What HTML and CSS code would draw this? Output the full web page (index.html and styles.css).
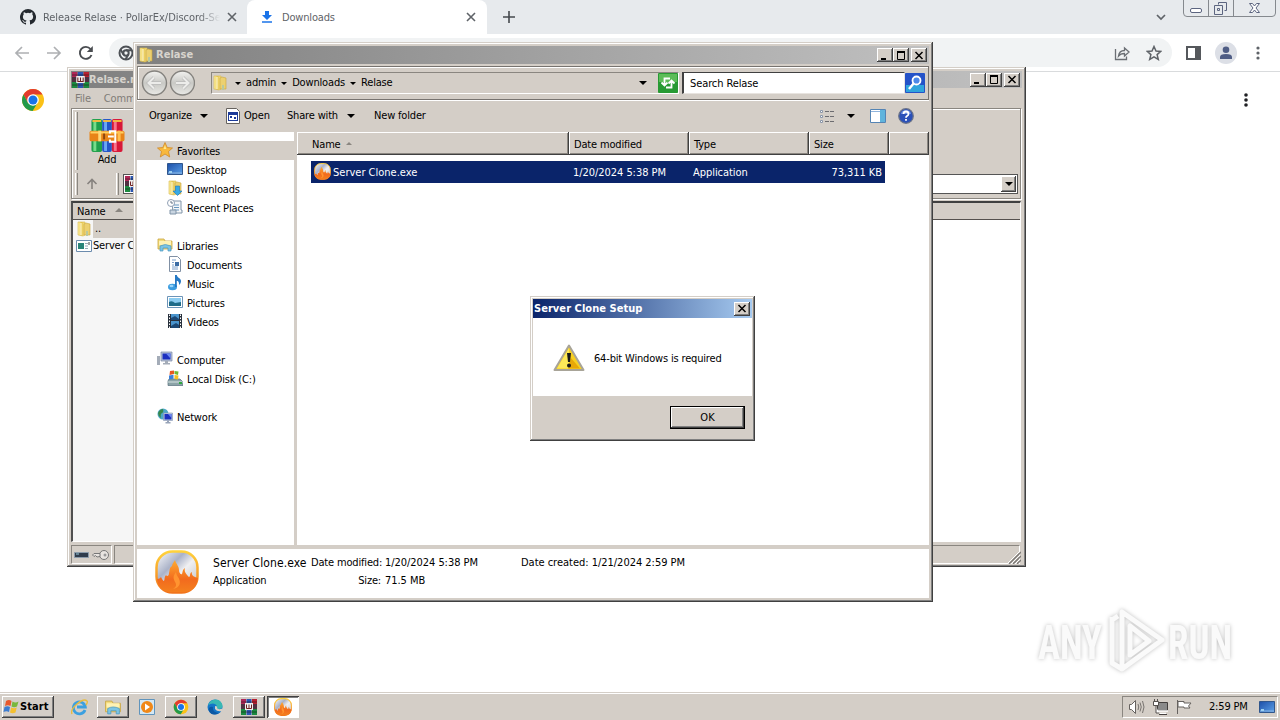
FILE: index.html
```html
<!DOCTYPE html>
<html lang="en">
<head>
    <meta charset="UTF-8">
    <meta name="viewport" content="width=device-width, initial-scale=1.0">
    <title>Downloads</title>
    <link rel="stylesheet" href="styles.css">
</head>
<body>
    <!-- shared icons -->
    <svg class="defs" width="0" height="0">
        <defs>
            <linearGradient id="gFolder" x1="0" x2="1"><stop offset="0" stop-color="#fff3a8"/><stop offset=".5" stop-color="#e8c850"/><stop offset="1" stop-color="#f3df8c"/></linearGradient>
            <linearGradient id="gFire" x1="0" y1="0" x2="0" y2="1"><stop offset="0" stop-color="#ffd23c"/><stop offset="1" stop-color="#f2741a"/></linearGradient>
            <linearGradient id="gFlame" x1="0" y1="0" x2="0" y2="1"><stop offset="0" stop-color="#ffac30"/><stop offset=".6" stop-color="#f26a1e"/><stop offset="1" stop-color="#f4801e"/></linearGradient>
            <linearGradient id="gSilver" x1="0" y1="0" x2="1" y2="1"><stop offset="0" stop-color="#fff"/><stop offset=".35" stop-color="#aab2c8"/><stop offset=".55" stop-color="#f0f0f2"/><stop offset="1" stop-color="#b8b8c0"/></linearGradient>
            <linearGradient id="gScreen" x1="0" y1="0" x2="1" y2="1"><stop offset="0" stop-color="#1c4fa8"/><stop offset="1" stop-color="#5ba0e8"/></linearGradient>
            <linearGradient id="gRound" x1="0" y1="0" x2="0" y2="1"><stop offset="0" stop-color="#f2f2f0"/><stop offset=".5" stop-color="#c9c9c5"/><stop offset="1" stop-color="#e9e9e6"/></linearGradient>
        </defs>
        <symbol id="folder" viewBox="0 0 16 16">
            <path d="M2 1h7v13l-2 1-5-1z" fill="url(#gFolder)" stroke="#d6b84e" stroke-width=".6"/>
            <path d="M8 3l2-1 4 1v11H8z" fill="#ecd070" stroke="#caa63c" stroke-width=".6"/>
            <path d="M5 2v12" stroke="#fffbe0"/><path d="M10 10h2v5h-2z" fill="#b8c8a0"/>
        </symbol>
        <symbol id="chrome" viewBox="0 0 24 24">
            <circle cx="12" cy="12" r="11" fill="#fbc116"/>
            <path d="M2.500 6.500A11 11 0 0 1 21.500 6.500H12l-5 8.400z" fill="#e33b2e"/>
            <path d="M2.500 6.500A11 11 0 0 0 11.600 23l5-8.200-4.600 2.600-5-2.500z" fill="#229a4a"/>
            <circle cx="12" cy="12" r="5.800" fill="#fff"/><circle cx="12" cy="12" r="4.500" fill="#1a73e8"/>
        </symbol>
        <symbol id="rar" viewBox="0 0 16 16">
            <path d="M0 0h5v16H0z" fill="#b02858"/><path d="M5.500 0h5v16h-5z" fill="#2c56b0"/><path d="M11 0h5v16h-5z" fill="#b82030"/>
            <path d="M0 10h5v6H0zM11 10h5v6h-5z" fill="#1c8a40"/>
            <path d="M0 5h16v5H0z" fill="#503040"/><path d="M4 4h8v7H4z" fill="#eee"/>
            <path d="M5.500 5.500v4h5v-4M8 5.500v4" fill="none" stroke="#702020"/><path d="M0 3h16M0 13h16" stroke="#111" opacity=".5"/>
        </symbol>
        <symbol id="rarbig" viewBox="0 0 36 36">
            <rect x="2" y="1" width="11" height="34" rx="2" fill="#21a04c"/><rect x="4" y="2" width="3" height="32" fill="#78dc8a"/>
            <rect x="13" y="1" width="10" height="34" rx="2" fill="#2456c8"/><rect x="15" y="2" width="3" height="32" fill="#6aa8f4"/>
            <rect x="23" y="1" width="11" height="34" rx="2" fill="#d81838"/><rect x="25" y="2" width="3" height="32" fill="#f8748c"/>
            <path d="M3 3h9M14 3h8M24 3h9" stroke="#f2b840" stroke-width="2"/>
            <rect x="0" y="13" width="36" height="11" rx="2" fill="#e88418"/><path d="M1 15h34" stroke="#ffd060" stroke-width="2"/>
            <rect x="9" y="13" width="3" height="11" fill="#ffd878"/><rect x="29" y="13" width="3" height="11" fill="#ffc050"/>
            <path d="M21 16v-2.500h5.500v11H21V22M19 19h6" fill="none" stroke="#fff" stroke-width="2"/><path d="M15 16v6" stroke="#8c4610" stroke-width="2"/>
        </symbol>
        <symbol id="fire" viewBox="0 0 44 44">
            <rect x="1.500" y="1.500" width="41" height="41" rx="16" fill="url(#gSilver)" stroke="url(#gFire)" stroke-width="2.500"/>
            <path d="M2 29c2 0 3-1 4-2 1 2 2 4 3 4 1-2 0-4 2-6 1 2 3 1 3-2 1-3 0-5 3-7 0-2 2-4 3-6 1 4 4 6 4 10 0 3 2 5 3 4 1-2 0-4 3-6-1 4 1 5 2 7 1 1 2 3 3 1 0-2 0-3 2-4-1 4 3 5 6 6-1 9-6 14-15 14H17C8 42 3 38 2 29z" fill="url(#gFlame)"/>
            <path d="M21 22c-3 4-3 6-1 10 2 3 1 5-2 7 8-1 8-8 5-12-1-2-2-3-2-5z" fill="#ff9430"/>
        </symbol>
        <symbol id="library" viewBox="0 0 16 16">
            <path d="M1 2h6l1 2h7v8H1z" fill="#f4dc7c" stroke="#c9a540" stroke-width=".8"/>
            <path d="M2 4h12v4H2z" fill="#fff2b4"/><path d="M3 14V9q5-3 11 0v5h-3v-3H6v3z" fill="#7cc4e4" stroke="#4a98be" stroke-width=".7"/>
        </symbol>
        <symbol id="screen" viewBox="0 0 16 16">
            <path d="M.5 2.500h15v11H.5z" fill="url(#gScreen)" stroke="#30568c"/><path d="M1 12h14" stroke="#8cb4e0"/><path d="M2 10h3v2H2z" fill="#9cd0f0"/>
        </symbol>
        <symbol id="monitor" viewBox="0 0 16 16">
            <path d="M4 1h11v9H4z" fill="#b8c4d8" stroke="#7888a8" stroke-width=".7"/><path d="M5.500 2.500h8v6h-8z" fill="#1c30c0"/><path d="M9 2.500h4.500v5z" fill="#6c88f0"/>
            <path d="M8 10h3v2h2v1.500H6V12h2zM0 5h3v9H0z" fill="#a4acb8"/>
        </symbol>
    </svg>

    <div class="desktop">
        <div class="browser">
            <div class="tabstrip">
                <div class="tab">
                    <svg class="tab-icon" width="16" height="16" viewBox="0 0 16 16"><path fill="#24292f" d="M8 0a8 8 0 0 0-2.530 15.590c.4.070.55-.17.55-.38v-1.490c-2.230.48-2.700-.95-2.700-.95-.36-.92-.89-1.170-.89-1.170-.73-.5.050-.49.050-.49.81.060 1.230.83 1.230.83.72 1.230 1.880.88 2.340.67.070-.52.280-.88.510-1.080-1.780-.2-3.650-.89-3.650-3.950 0-.87.310-1.590.82-2.150-.08-.2-.36-1.020.080-2.120 0 0 .67-.21 2.200.82a7.600 7.600 0 0 1 4 0c1.530-1.040 2.200-.82 2.200-.82.44 1.100.16 1.920.080 2.120.51.560.82 1.270.82 2.150 0 3.070-1.870 3.750-3.650 3.950.29.250.54.730.54 1.480v2.200c0 .21.150.46.550.38A8 8 0 0 0 8 0z"/></svg>
                    <span class="tab-title fade">Release Relase · PollarEx/Discord-Se</span>
                    <svg width="10" height="10" viewBox="0 0 10 10"><path d="M1 1l8 8M9 1L1 9" stroke="#5f6368" stroke-width="1.600"/></svg>
                </div>
                <div class="tab active">
                    <svg class="tab-icon" width="16" height="16" viewBox="0 0 16 16"><path d="M6 2h4v4h3L8 11 3 6h3z" fill="#1a73e8"/><path d="M3 13h10" stroke="#1a73e8" stroke-width="1.500"/></svg>
                    <span class="tab-title">Downloads</span>
                    <svg width="10" height="10" viewBox="0 0 10 10"><path d="M1 1l8 8M9 1L1 9" stroke="#5f6368" stroke-width="1.600"/></svg>
                </div>
                <svg class="newtab" width="12" height="12" viewBox="0 0 12 12"><path d="M6 0v12M0 6h12" stroke="#45494d" stroke-width="1.600"/></svg>
                <svg class="tabsearch" width="10" height="7" viewBox="0 0 10 7"><path d="M1 1l4 4 4-4" fill="none" stroke="#5f6368" stroke-width="1.700"/></svg>
                <svg class="winbtns" width="94" height="17" viewBox="0 0 94 17" fill="none">
                    <path d="M.5-1v14q0 3.500 3.500 3.500h85q3.500 0 3.500-3.500V-1M25.500 0v16M50.500 0v16" stroke="#85898e"/>
                    <rect x="7.500" y="8.500" width="11" height="4" rx="1.500" stroke="#5c6580" fill="#fff"/>
                    <path d="M35.500 4.500v-2h8v8h-2M31.500 5.500h8v9h-8zM34.500 8.500h2v2h-2z" stroke="#5c6580"/>
                    <path d="M66.500 3.500h3l2 2.500 2-2.500h3L73 8l3.500 4.500h-3l-2-2.500-2 2.500h-3L70 8z" stroke="#5c6580" fill="#fff"/>
                </svg>
            </div>
            <div class="toolbar">
                <div class="nav-icons">
                    <svg width="16" height="16" viewBox="0 0 16 16" fill="none" stroke="#aeb0b3" stroke-width="1.700"><path d="M15 8H2M8 2L2 8l6 6"/></svg>
                    <svg width="16" height="16" viewBox="0 0 16 16" fill="none" stroke="#aeb0b3" stroke-width="1.700"><path d="M1 8h13M8 2l6 6-6 6"/></svg>
                    <svg width="16" height="16" viewBox="0 0 16 16"><path d="M13.500 10A6 6 0 1 1 12.500 4" fill="none" stroke="#4a4d51" stroke-width="1.900"/><path d="M14.800 1v6h-6z" fill="#4a4d51"/></svg>
                </div>
                <div class="omnibox">
                    <svg width="16" height="16" viewBox="0 0 16 16" fill="none" stroke="#4d5156" stroke-width="2"><circle cx="8" cy="8" r="6.500"/><circle cx="8" cy="8" r="2.700"/><path d="M8 5.300h6M5.500 9.500L2.500 4.500M10.400 9.500l-3 5"/></svg>
                    <div class="omni-actions">
                        <svg width="16" height="16" viewBox="0 0 16 16" fill="none" stroke="#6b6f74" stroke-width="1.300"><path d="M1.500 4v10.500h11v-3"/><path d="M4.500 11c.5-4 2.500-5.500 6-5.500V3l4.500 4-4.500 4V8.500C8 8.500 6 9 4.500 11z"/></svg>
                        <svg width="16" height="16" viewBox="0 0 16 16"><path d="M8 1.500l2 4.500 4.800.4-3.700 3.200 1.200 4.800L8 11.800l-4.300 2.600 1.200-4.800L1.200 6.400 6 6z" fill="none" stroke="#5f6368" stroke-width="1.500"/></svg>
                    </div>
                </div>
                <svg class="sidepanel" width="15" height="14" viewBox="0 0 15 14"><path d="M1 1h13v12H1z" fill="none" stroke="#55585c" stroke-width="2"/><path d="M9 0h6v14H9z" fill="#55585c"/></svg>
                <div class="avatar"><svg width="14" height="14" viewBox="0 0 14 14" fill="#4f5d85"><circle cx="7" cy="3.800" r="3.300"/><path d="M1 13v-2q0-3 6-3t6 3v2z"/></svg></div>
                <svg class="menu" width="4" height="14" viewBox="0 0 4 14" fill="#5f6368"><circle cx="2" cy="2" r="1.600"/><circle cx="2" cy="7" r="1.600"/><circle cx="2" cy="12" r="1.600"/></svg>
            </div>
            <div class="page">
                <svg width="24" height="24"><use href="#chrome"/></svg>
                <svg width="4" height="14" viewBox="0 0 4 14" fill="#202124"><circle cx="2" cy="2" r="1.800"/><circle cx="2" cy="7" r="1.800"/><circle cx="2" cy="12" r="1.800"/></svg>
            </div>
        </div>

        <div class="window winrar">
            <div class="titlebar">
                <svg width="17" height="16" viewBox="0 0 16 16" preserveAspectRatio="none"><use href="#rar" width="16" height="16"/></svg>
                <span class="title">Relase.rar</span>
                <div class="buttons">
                    <div class="wbtn"><svg width="10" height="9"><path d="M1 8h5" stroke="#000" stroke-width="2"/></svg></div>
                    <div class="wbtn"><svg width="10" height="9"><path d="M1 1h8M1.500 1v7.500h7V1" stroke="#000" fill="none"/><path d="M1 1h8" stroke="#000" stroke-width="2"/></svg></div>
                    <div class="wbtn close"><svg width="10" height="9"><path d="M1.500 1l7 7M8.500 1l-7 7" stroke="#000" stroke-width="1.500"/></svg></div>
                </div>
            </div>
            <div class="rar-menu"><span>File</span><span>Commands</span></div>
            <div class="rar-tools">
                <div class="rar-row big">
                    <i class="grip"></i>
                    <div class="rar-add"><svg width="36" height="35"><use href="#rarbig"/></svg><span>Add</span></div>
                </div>
                <div class="rar-row small">
                    <i class="grip"></i>
                    <svg class="up" width="12" height="12" viewBox="0 0 12 12"><path d="M6 11V2M1.500 6L6 1.500 10.500 6" fill="none" stroke="#86827e" stroke-width="1.600"/></svg>
                    <i class="grip"></i>
                    <div class="combo">
                        <svg width="16" height="16"><use href="#rar"/></svg>
                        <div class="drop"><i class="tri"></i></div>
                    </div>
                </div>
            </div>
            <div class="rar-list">
                <div class="rar-head">Name <i class="tri-up"></i></div>
                <div class="rar-rows">
                    <div class="rar-item sel"><svg width="16" height="16"><use href="#folder"/></svg><span>..</span></div>
                    <div class="rar-item"><svg width="16" height="14" viewBox="0 0 16 14"><path d="M.5 1.500h15v11H.5z" fill="#fff" stroke="#6c8cae"/><path d="M2 4h6v6H2z" fill="#2a8478"/><path d="M9 4.500h3M9 7h3M9 9.500h3" stroke="#9aa8b8"/><path d="M13 3v3" stroke="#444"/></svg><span>Server Clone.exe</span></div>
                </div>
            </div>
            <div class="rar-status">
                <div class="cell icons">
                    <svg width="15" height="8"><path d="M.5 1.500h14v5H.5z" fill="#303c4c" stroke="#8c9cac"/><path d="M2 3h3" stroke="#9cd"/></svg>
                    <svg width="17" height="12" viewBox="0 0 17 12"><circle cx="12" cy="6" r="4.500" fill="#e8e4e0" stroke="#777"/><circle cx="13" cy="6" r="1.500" fill="#999"/><path d="M8 4.500H2L.5 6 2 7.500l1.500-1L5 8l3-.5z" fill="#e8e4e0" stroke="#777"/></svg>
                </div>
                <div class="cell wide"></div>
                <svg class="resize" width="13" height="13" viewBox="0 0 13 13"><path d="M1 13L13 1M5 13l8-8M9 13l4-4" stroke="#7d7a76" stroke-width="1.500"/><path d="M0 12L12 0M4 12l8-8M8 12l4-4" stroke="#fff"/></svg>
            </div>
        </div>

        <div class="window explorer">
            <div class="titlebar">
                <svg width="16" height="16"><use href="#folder"/></svg>
                <span class="title">Relase</span>
                <div class="buttons">
                    <div class="wbtn"><svg width="10" height="9"><path d="M1 8h5" stroke="#000" stroke-width="2"/></svg></div>
                    <div class="wbtn"><svg width="10" height="9"><path d="M1 1h8M1.500 1v7.500h7V1" stroke="#000" fill="none"/><path d="M1 1h8" stroke="#000" stroke-width="2"/></svg></div>
                    <div class="wbtn close"><svg width="10" height="9"><path d="M1.500 1l7 7M8.500 1l-7 7" stroke="#000" stroke-width="1.500"/></svg></div>
                </div>
            </div>
            <div class="addressbar">
                <svg class="backfwd" width="54" height="28" viewBox="0 0 54 28">
                    <circle cx="13.500" cy="14" r="12" fill="url(#gRound)" stroke="#85837f" stroke-width="1.400"/><circle cx="41.500" cy="14" r="12" fill="url(#gRound)" stroke="#85837f" stroke-width="1.400"/>
                    <path d="M20 14H8M13 8.500L7.500 14l5.500 5.500M35 14h12M42 8.500l5.500 5.500-5.500 5.500" fill="none" stroke="#bbb" stroke-width="3.500"/>
                    <path d="M20 14H8M13 8.500L7.500 14l5.500 5.500M35 14h12M42 8.500l5.500 5.500-5.500 5.500" fill="none" stroke="#ececea" stroke-width="2"/>
                </svg>
                <div class="crumbs">
                    <svg width="16" height="16"><use href="#folder"/></svg>
                    <i class="tri sm"></i><span>admin</span>
                    <i class="tri sm"></i><span>Downloads</span>
                    <i class="tri sm"></i><span>Relase</span>
                    <i class="tri last"></i>
                    <svg class="refresh" width="20" height="20" viewBox="0 0 20 20"><rect width="20" height="20" rx="1" fill="#279a33"/><path d="M1 1h18v8H1z" fill="#5cbc58"/><path d="M12 5.500H6.500V12M3.500 9.500l3 3 3-3M8 14.500h5.500V8M10.500 10.500l3-3 3 3" fill="none" stroke="#fff" stroke-width="1.800"/></svg>
                </div>
                <div class="search">Search Relase</div>
                <svg class="search-btn" width="20" height="20" viewBox="0 0 20 20"><rect width="20" height="20" rx="1" fill="#2452c8"/><path d="M1 12h18v7H1z" fill="#30a4dc"/><circle cx="11.500" cy="7.500" r="4" fill="#4c88e8" stroke="#fff" stroke-width="1.800"/><path d="M8.500 10.500L4 16" stroke="#fff" stroke-width="2.400"/></svg>
            </div>
            <div class="commands">
                <span class="organize">Organize</span><i class="tri"></i>
                <svg class="open-icon" width="14" height="16" viewBox="0 0 14 16"><path d="M.5.5h10l3 3v12H.5z" fill="#fff" stroke="#66625e"/><path d="M2 4h10v9H2z" fill="#1c3a98"/><path d="M3 7h8v5H3z" fill="#fff"/><path d="M4 8h2v2H4zM8 9h2v2H8z" fill="#1c3a98"/></svg>
                <span class="open">Open</span>
                <span class="share">Share with</span><i class="tri"></i>
                <span class="newf">New folder</span>
                <svg class="views" width="16" height="13" viewBox="0 0 16 13"><path d="M1.500.5h2v2h-2zM1.500 5.500h2v2h-2zM1.500 10.500h2v2h-2z" fill="#fff" stroke="#8a96a8"/><path d="M6 1.500h4M11 1.500h4M6 6.500h4M11 6.500h4M6 11.500h4M11 11.500h4" stroke="#6c6c70"/></svg>
                <i class="tri"></i>
                <svg class="preview" width="16" height="14" viewBox="0 0 16 14"><path d="M.5.5h15v13H.5z" fill="#fff" stroke="#5484b4"/><path d="M1 2.500h9" stroke="#90b4dc"/><path d="M10 1h5v12h-5z" fill="#60b4dc"/></svg>
                <svg width="16" height="16" viewBox="0 0 16 16"><circle cx="8" cy="8" r="7.300" fill="#2a50b8" stroke="#6c7488" stroke-width="1.200"/><path d="M3 6a5 4 0 0 1 10 0z" fill="#6e90e0"/><path d="M5.500 6q0-2.500 2.500-2.500T10.500 6q0 1.200-1.500 2-1 .6-1 1.700M8 11v1.800" fill="none" stroke="#fff" stroke-width="1.800"/></svg>
            </div>
            <div class="body">
                <div class="sidebar">
                    <div class="node root sel"><svg width="16" height="16" viewBox="0 0 16 16"><path d="M8 .5l2.200 5 5.300.5-4 3.500 1.200 5.500L8 12l-4.700 3 1.200-5.500L.5 6l5.300-.5z" fill="#f8b83c" stroke="#d08a28" stroke-width=".8"/><path d="M8 3l1.300 4H6.500z" fill="#ffe88c"/></svg><span>Favorites</span></div>
                    <div class="node"><svg width="16" height="16"><use href="#screen"/></svg><span>Desktop</span></div>
                    <div class="node"><svg width="16" height="16" viewBox="0 0 16 16"><use href="#folder" width="16" height="16"/><path d="M8.500 6h4v5H15l-4.500 4.500L6 11h2.500z" fill="#38a8e4" stroke="#1c78b8" stroke-width=".6"/></svg><span>Downloads</span></div>
                    <div class="node"><svg width="16" height="16" viewBox="0 0 16 16"><path d="M5 2h9v9h1v3H6z" fill="#f4f6f8" stroke="#8094a8"/><circle cx="4" cy="4" r="3.500" fill="#fff" stroke="#90a0b4"/><path d="M4 2v2h2" fill="none" stroke="#678"/><path d="M7 6h5M7 8.500h5M7 11h5" stroke="#6898c0"/><path d="M3 11h6v4H3z" fill="#c8d4e0" stroke="#8094a8"/></svg><span>Recent Places</span></div>
                    <div class="node gap root"><svg width="16" height="16"><use href="#library"/></svg><span>Libraries</span></div>
                    <div class="node"><svg width="16" height="16" viewBox="0 0 16 16"><path d="M2.500.5h8l3 3v12h-11z" fill="#fff" stroke="#8090a4"/><path d="M5 4h4M5 6.500h2M5 9h2M5 11h6M5 13h6" stroke="#7ca0cc"/><path d="M8 6h4v4H8z" fill="#3c6ca4"/></svg><span>Documents</span></div>
                    <div class="node"><svg width="16" height="16" viewBox="0 0 16 16"><ellipse cx="5.500" cy="12" rx="4.500" ry="3.300" fill="#3a9ce0"/><path d="M8 0h1.800c.4 3 4.200 3 4.200 6 0 2-1 3-2 4 .4-3-1-4-2.200-4.200V12H8z" fill="#2478c4"/><ellipse cx="4.500" cy="11" rx="2" ry="1.200" fill="#98d4f8"/></svg><span>Music</span></div>
                    <div class="node"><svg width="16" height="16" viewBox="0 0 16 16"><path d="M.5 2.500h15v11H.5z" fill="#fff" stroke="#6c94b8"/><path d="M2 4h12v8H2z" fill="#8cccf0"/><path d="M2 8q3-2 6 1l6-1v4H2z" fill="#206c88"/></svg><span>Pictures</span></div>
                    <div class="node"><svg width="16" height="16" viewBox="0 0 16 16"><path d="M1 1h14v14H1z" fill="#28303c"/><path d="M4 1h8v6H4zM4 8h8v7H4z" fill="#4a94cc"/><path d="M4 5l4-2 4 3v1H4zM4 13l5-3 3 2v3H4z" fill="#1c4874"/><path d="M2.500 1.500v14M13.500 1.500v14" stroke="#fff" stroke-dasharray="1.500 1.500"/></svg><span>Videos</span></div>
                    <div class="node gap root"><svg width="16" height="16"><use href="#monitor"/></svg><span>Computer</span></div>
                    <div class="node"><svg width="16" height="16" viewBox="0 0 16 16"><path d="M2 9h11l3 3v3.500H1V11z" fill="#8ca4a8" stroke="#56707c" stroke-width=".7"/><path d="M1 12h15" stroke="#d8e4e4"/><path d="M3 1l4-.5V4L2.500 5z" fill="#e85820"/><path d="M7.500 1l4 .5L11 5 7.500 4z" fill="#70b830"/><path d="M2 5.500l4.500-.8v4L2 9.500z" fill="#3c80d8"/><path d="M7.500 5l4 .5-.5 4-3.500-.5z" fill="#f8c020"/><path d="M12 12h3v2h-3z" fill="#30a840"/></svg><span>Local Disk (C:)</span></div>
                    <div class="node gap root"><svg width="16" height="16" viewBox="0 0 16 16"><circle cx="6" cy="6" r="5.500" fill="#4ca8c8"/><path d="M1 5q2-4 5-4 1 3-1 4t-1 5Q1 8 1 5z" fill="#38884c"/><path d="M6.500 5h9v7.500h-9z" fill="#c0cce0" stroke="#8090b0" stroke-width=".6"/><path d="M7.500 6h7v5.500h-7z" fill="#1c30c0"/><path d="M11 6h3.500v4z" fill="#6c88f0"/><path d="M10 12.500h2V14h1.500v1.500h-5V14H10z" fill="#98a4b8"/></svg><span>Network</span></div>
                </div>
                <div class="files">
                    <div class="file-head">
                        <div class="col c-name">Name <i class="tri-up"></i></div>
                        <div class="col c-date">Date modified</div>
                        <div class="col c-type">Type</div>
                        <div class="col c-size">Size</div>
                        <div class="col c-rest"></div>
                    </div>
                    <div class="file-row">
                        <div class="f-name"><svg width="17" height="17"><use href="#fire"/></svg><span>Server Clone.exe</span></div>
                        <div class="f-date">1/20/2024 5:38 PM</div>
                        <div class="f-type">Application</div>
                        <div class="f-size">73,311 KB</div>
                    </div>
                </div>
            </div>
            <div class="details">
                <svg width="44" height="44"><use href="#fire"/></svg>
                <div class="d-name"><span class="d-file">Server Clone.exe</span><span>Application</span></div>
                <div class="d-label"><span>Date modified:</span><span>Size:</span></div>
                <div class="d-value"><span>1/20/2024 5:38 PM</span><span>71.5 MB</span></div>
                <div class="d-created"><span>Date created: 1/21/2024 2:59 PM</span></div>
            </div>
        </div>

        <div class="window dialog">
            <div class="titlebar">
                <span class="title">Server Clone Setup</span>
                <div class="buttons"><div class="wbtn close"><svg width="10" height="9"><path d="M1.500 1l7 7M8.500 1l-7 7" stroke="#000" stroke-width="1.500"/></svg></div></div>
            </div>
            <div class="message">
                <svg width="32" height="28" viewBox="0 0 32 28">
                    <path d="M16 1.500L30.500 26H1.500z" fill="#f8d020" stroke="#a8a498" stroke-width="2" stroke-linejoin="round"/>
                    <path d="M16 4v20.500H4z" fill="#fce858"/><path d="M18 14l9 10.500H15z" fill="#e8a808"/>
                    <path d="M14 9h4l-1 9h-2z" fill="#181818"/><circle cx="16" cy="21.500" r="2" fill="#181818"/>
                </svg>
                <span>64-bit Windows is required</span>
            </div>
            <div class="dialog-foot"><button class="ok">OK</button></div>
        </div>

        <svg class="watermark" width="230" height="76" viewBox="0 0 230 76">
            <g class="wm-text">
                <text x="8" y="56" textLength="64" lengthAdjust="spacingAndGlyphs">ANY</text>
                <text x="138" y="56" textLength="64" lengthAdjust="spacingAndGlyphs">RUN</text>
            </g>
            <path class="wm-logo" d="M82 14v46l10 6M82 17l6-4M92 9v57l40-29zM100 23v29l19-14z"/>
        </svg>

        <div class="taskbar">
            <div class="start">
                <svg width="17" height="16" viewBox="0 0 17 16"><path d="M3 2q3-2 5.500 0L7.500 7Q5 5.500 2 7z" fill="#e8582c"/><path d="M9.500 2.500q3 2 6 0L14 7.500q-3 1.500-5.500 0z" fill="#78b83c"/><path d="M1.500 8q3-1.500 5.500 0l-1 5q-2.500-1.500-5.500 0z" fill="#3c7cd0"/><path d="M8.200 8.500q3 1.500 5.500 0l-1.200 5q-3 1.500-5.500 0z" fill="#f4c030"/></svg>
                <span>Start</span>
            </div>
            <div class="tasks">
                <div class="task flat"><svg width="17" height="17" viewBox="0 0 17 17"><path d="M14 11A6 6 0 1 1 14.300 8H6" fill="none" stroke="#3ca0e0" stroke-width="2.800"/><path d="M1 15Q-1 11 6 5t10-3q1 1-1 4" fill="none" stroke="#e8bc40" stroke-width="1.400"/></svg></div>
                <div class="task raised"><svg width="18" height="17"><use href="#library"/></svg></div>
                <div class="task flat"><svg width="16" height="16" viewBox="0 0 16 16"><path d="M.5.5h15v15H.5z" fill="#d4e8f4" stroke="#6094bc"/><circle cx="8" cy="8" r="6" fill="#f08818"/><path d="M6 4.500l5 3.500-5 3.500z" fill="#fff"/></svg></div>
                <div class="task raised"><svg width="16" height="16"><use href="#chrome"/></svg></div>
                <div class="task flat"><svg width="16" height="16" viewBox="0 0 16 16"><circle cx="8" cy="8" r="7.500" fill="#1476c8"/><path d="M1 6.500Q3 .5 8.500.5C13 .5 15.500 4 15.500 7q0 3-4 3-2 0-1.500-2 0-3-4-3.500-3 0-5 2z" fill="#38b8b4"/><path d="M6 8q-1 5 6 6-7 4-10-2-1-5 4-4z" fill="#0c58a4"/><path d="M8 7q3 0 2 2 1 2 5.500.5L15 12q-5 1-7-2z" fill="#d6d0c8"/></svg></div>
                <div class="task raised"><svg width="16" height="16"><use href="#rar"/></svg></div>
                <div class="task pressed"><svg width="18" height="18"><use href="#fire"/></svg></div>
            </div>
            <div class="tray">
                <svg width="17" height="16" viewBox="0 0 17 16"><path d="M1.500 5.500h2l4-4v13l-4-4h-2z" fill="#fff" stroke="#66625f"/><path d="M10 5q1.500 3 0 6M12 3.500q2.500 4.500 0 9M14.500 2q3 6 0 12" fill="none" stroke="#77736f"/></svg>
                <svg width="17" height="16" viewBox="0 0 17 16"><path d="M5.500 3.500h10v8h-10z" fill="#8a8a8a" stroke="#44403e"/><path d="M5 12h11M8 14.500h6" stroke="#fff" stroke-width="1.500"/><path d="M7 15.500h8" stroke="#44403e"/><path d="M1.500 2.500h5v4h-5zM2.500 0v2M5.500 0v2M4 7v7h3" fill="#fff" stroke="#55514e"/></svg>
                <svg width="16" height="16" viewBox="0 0 16 16"><path d="M1.500 1v14M2 2.500h6v1.500h7l-2.500 3L14 9H8V8H2z" fill="#fff" stroke="#66625f"/></svg>
                <span class="clock">2:59 PM</span>
                <svg width="16" height="14" viewBox="0 1 16 14"><use href="#screen" width="16" height="16"/></svg>
            </div>
        </div>
    </div>
</body>
</html>
```

FILE: styles.css
```css
* {
    box-sizing: border-box;
}
body {
    margin: 0;
    font-family: Tahoma, "DejaVu Sans Condensed", "DejaVu Sans", sans-serif;
    font-stretch: condensed;
    font-size: 11px;
    letter-spacing: -0.17px;
    line-height: 14px;
    color: #000;
    overflow: hidden;
}
svg {
    display: block;
    flex-shrink: 0;
}
.defs {
    position: absolute;
}
span {
    white-space: nowrap;
}
.desktop {
    position: relative;
    width: 1280px;
    height: 720px;
    display: flex;
    flex-direction: column;
    overflow: hidden;
    background: #fff;
}

/* browser */
.browser {
    flex: 1;
    display: flex;
    flex-direction: column;
}
.tabstrip {
    height: 34px;
    background: #e7eaed;
    display: flex;
    align-items: center;
    padding-left: 8px;
}
.tab {
    width: 239px;
    height: 34px;
    padding: 0 10px 0 12px;
    display: flex;
    align-items: center;
    gap: 7px;
    color: #5f6368;
}
.tab.active {
    width: 240px;
    padding-right: 11px;
    background: #fff;
    border-radius: 8px 8px 0 0;
}
.tab-title {
    flex: 1;
    overflow: hidden;
    padding-top: 1px;
}
.tab-title.fade {
    letter-spacing: -0.05px;
    -webkit-mask-image: linear-gradient(90deg, #000 88%, transparent);
    mask-image: linear-gradient(90deg, #000 88%, transparent);
}
.newtab {
    margin-left: 16px;
}
.tabsearch {
    margin-left: auto;
    margin-right: 17px;
}
.winbtns {
    align-self: flex-start;
    margin-right: 3px;
}
.toolbar {
    height: 38px;
    border-bottom: 1px solid #d9dbdd;
    display: flex;
    align-items: center;
    padding: 0 20px 0 14px;
}
.nav-icons {
    display: flex;
    gap: 16px;
    width: 95px;
}
.omnibox {
    width: 1063px;
    height: 29px;
    border-radius: 15px;
    background: #f1f3f4;
    display: flex;
    align-items: center;
    justify-content: space-between;
    padding: 0 10px 0 9px;
}
.omni-actions {
    display: flex;
    gap: 16px;
}
.sidepanel {
    margin-left: 14px;
}
.avatar {
    width: 22px;
    height: 22px;
    margin-left: 14px;
    border-radius: 50%;
    background: #dcdfe6;
    display: flex;
    align-items: center;
    justify-content: center;
}
.menu {
    margin-left: auto;
}
.page {
    flex: 1;
    display: flex;
    justify-content: space-between;
    padding: 16px 32px 0 21px;
}
.page svg:last-child {
    margin-top: 5px;
}

/* classic windows */
.window {
    position: absolute;
    background: #d4cec7;
    padding: 4px;
    display: flex;
    flex-direction: column;
    box-shadow: inset -1px -1px #404040, inset 1px 1px #d4cec7, inset -2px -2px #808080, inset 2px 2px #fff;
}
.titlebar {
    height: 18px;
    flex-shrink: 0;
    display: flex;
    align-items: center;
    padding: 0 2px 0 1px;
    background: linear-gradient(90deg, #808080, #c0c0c0);
    color: #d8d4ce;
    font-weight: bold;
    letter-spacing: 0.05px;
}
.title {
    margin-left: 2px;
}
.buttons {
    margin-left: auto;
    display: flex;
}
.wbtn {
    width: 16px;
    height: 14px;
    background: #d4cec7;
    display: flex;
    align-items: center;
    justify-content: center;
    box-shadow: inset -1px -1px #404040, inset 1px 1px #fff, inset -2px -2px #808080;
}
.wbtn.close {
    margin-left: 2px;
}
.tri {
    border: 4px solid transparent;
    border-top-color: #000;
    border-bottom: 0;
}
.tri.sm {
    border-width: 3px 3px 0;
}
.tri-up {
    display: inline-block;
    border: 3px solid transparent;
    border-bottom-color: #8a8680;
    border-top: 0;
    vertical-align: 3px;
    margin-left: 2px;
}

/* archive window */
.winrar {
    left: 67px;
    top: 67px;
    width: 959px;
    height: 500px;
    padding-bottom: 3px;
}
.winrar .titlebar {
    height: 17px;
}
.winrar .title {
    margin-left: 0;
}
.rar-menu {
    height: 20px;
    padding: 4px 4px;
    display: flex;
    gap: 13px;
    color: #807c77;
}
.rar-tools {
    height: 91px;
    margin-right: 1px;
    border: 1px solid #8a8680;
    box-shadow: inset 1px 1px #fff, 1px 1px #fff;
    padding: 3px;
    display: flex;
    flex-direction: column;
    gap: 3px;
}
.rar-row {
    display: flex;
    align-items: center;
}
.rar-row.big {
    height: 58px;
}
.rar-row.small {
    height: 22px;
}
.grip {
    width: 3px;
    height: 100%;
    border-left: 1px solid #fff;
    border-right: 1px solid #8a8680;
}
.rar-add {
    width: 58px;
    padding-top: 2px;
    display: flex;
    flex-direction: column;
    align-items: center;
}
.up {
    margin: 0 18px 0 8px;
}
.combo {
    flex: 1;
    height: 20px;
    margin-left: 4px;
    margin-right: -1px;
    background: #fff;
    border: 1px solid #555;
    display: flex;
    align-items: center;
    justify-content: space-between;
    padding: 1px;
}
.drop {
    width: 15px;
    height: 16px;
    background: #d4cec7;
    display: flex;
    align-items: center;
    justify-content: center;
    box-shadow: inset -1px -1px #404040, inset 1px 1px #fff, inset -2px -2px #808080;
}
.rar-list {
    flex: 1;
    margin: 2px 1px 0 0;
    border: 1px solid #fff;
    border-top: 2px solid #404040;
    border-left: 2px solid #505050;
    background: #fff;
    display: flex;
    flex-direction: column;
}
.rar-head {
    height: 17px;
    padding: 2px 4px;
    background: #d4cec7;
    border-bottom: 1px solid #55514e;
}
.rar-head .tri-up {
    margin-left: 6px;
    border-width: 0 4px 4px;
}
.rar-rows {
    width: 300px;
    flex: 1;
    background: #f6f6f6;
}
.rar-item {
    height: 17px;
    padding-left: 3px;
    display: flex;
    align-items: center;
    gap: 1px;
}
.rar-item.sel span {
    background: #d4cec7;
    width: 200px;
    padding: 2px;
}
.rar-status {
    height: 22px;
    display: flex;
    gap: 2px;
    padding-top: 3px;
    margin-right: 1px;
}
.cell {
    border: 1px solid #8a8680;
    border-right-color: #fff;
    border-bottom-color: #fff;
}
.cell.icons {
    width: 41px;
    display: flex;
    align-items: center;
    justify-content: center;
    gap: 3px;
}
.cell.wide {
    flex: 1;
    margin-right: -14px;
}
.resize {
    align-self: flex-end;
}

/* explorer */
.explorer {
    left: 133px;
    top: 42px;
    width: 800px;
    height: 560px;
}
.addressbar {
    height: 34px;
    margin-top: 2px;
    border: 1px solid #77736f;
    border-left-color: #8a8680;
    box-shadow: inset 1px 1px #fff, 0 1px #fff;
    display: flex;
    align-items: center;
    padding: 0 0 0 3px;
}
.backfwd {
    margin-right: 16px;
}
.crumbs {
    width: 468px;
    height: 22px;
    border: 1px solid #8a8680;
    border-right-color: #fff;
    border-bottom-color: #fff;
    display: flex;
    align-items: center;
}
.crumbs .tri.sm {
    margin: 0 5px 0 5px;
}
.crumbs svg + .tri.sm {
    margin-left: 7px;
}
.crumbs .last {
    margin-left: auto;
}
.refresh {
    margin-left: 11px;
}
.search {
    width: 223px;
    height: 22px;
    margin-left: 3px;
    padding: 4px 6px;
    background: #fff;
    border: 1px solid #404040;
    border-right-color: #e8e4e0;
    border-bottom-color: #e8e4e0;
    border-left-width: 2px;
    letter-spacing: -0.1px;
}
.search-btn {
    margin-left: 0;
}
.commands {
    height: 32px;
    flex-shrink: 0;
    display: flex;
    align-items: center;
    padding: 0 15px 0 12px;
}
.organize {
    width: 51px;
}
.open-icon {
    margin: 0 4px 0 18px;
}
.open {
    width: 43px;
}
.share {
    width: 60px;
}
.newf {
    margin-left: 19px;
}
.views {
    margin-left: auto;
    margin-right: 12px;
}
.preview {
    margin: 0 12px 0 15px;
}
.body {
    flex: 1;
    display: flex;
}
.sidebar {
    width: 157px;
    background: #fff;
    padding-top: 9px;
}
.node {
    height: 19px;
    padding-left: 30px;
    display: flex;
    align-items: center;
    gap: 4px;
}
.node span {
    padding-top: 2px;
}
.node svg {
    margin-top: -1px;
}
.node.root {
    padding-left: 20px;
}
.node.gap {
    margin-top: 19px;
}
.node.sel {
    background: #d4cec7;
}
.files {
    flex: 1;
    margin-left: 3px;
    background: #fff;
}
.file-head {
    height: 23px;
    display: flex;
    background: #d4cec7;
}
.col {
    padding: 6px 5px 0;
    box-shadow: inset -1px -1px #404040, inset 1px 1px #fff, inset -2px -2px #8a8680;
}
.c-name {
    width: 272px;
    padding-left: 15px;
}
.c-date,
.c-type {
    width: 120px;
}
.c-size {
    width: 80px;
}
.c-rest {
    flex: 1;
}
.file-row {
    width: 574px;
    height: 22px;
    margin: 6px 0 0 14px;
    padding-top: 1px;
    background: #0a246a;
    color: #fff;
    display: flex;
    align-items: center;
    letter-spacing: -0.05px;
}
.f-name {
    width: 262px;
    padding-left: 3px;
    display: flex;
    align-items: center;
    gap: 2px;
    letter-spacing: 0;
}
.f-name svg {
    margin-top: -2px;
}
.f-date {
    width: 120px;
}
.f-type {
    width: 100px;
}
.f-size {
    flex: 1;
    text-align: right;
    padding-right: 3px;
}
.details {
    height: 49px;
    flex-shrink: 0;
    margin-top: 4px;
    background: #fff;
    display: flex;
    padding-left: 18px;
}
.details svg {
    margin-top: 1px;
}
.details div {
    display: flex;
    flex-direction: column;
    gap: 4px;
    padding-top: 7px;
}
.details .d-name {
    width: 98px;
    margin-left: 14px;
}
.d-file {
    font-size: 12px;
    letter-spacing: 0.1px;
}
.details .d-label {
    width: 70px;
    text-align: right;
}
.details .d-value {
    width: 136px;
    margin-left: 4px;
    letter-spacing: -0.05px;
}
.d-created {
    letter-spacing: -0.02px;
}

/* message box */
.dialog {
    left: 530px;
    top: 296px;
    width: 225px;
    height: 145px;
    padding: 3px;
}
.dialog .titlebar {
    height: 19px;
    background: linear-gradient(90deg, #0a246a, #a6caf0);
    color: #fff;
}
.dialog .title {
    margin-left: 0;
}
.message {
    flex: 1;
    background: #fff;
    display: flex;
    align-items: center;
    gap: 9px;
    padding: 2px 0 0 20px;
}
.message span {
    padding-top: 1px;
}
.dialog-foot {
    height: 42px;
    padding: 10px 7px 0;
    display: flex;
    justify-content: flex-end;
}
.ok {
    width: 75px;
    height: 23px;
    padding: 0;
    border: 1px solid #000;
    background: #d4cec7;
    font: inherit;
    box-shadow: inset -1px -1px #404040, inset 1px 1px #fff, inset -2px -2px #808080;
}

.watermark {
    position: absolute;
    left: 1030px;
    top: 603px;
    filter: drop-shadow(0 0 2px rgba(0, 0, 0, 0.25));
}
.wm-text {
    font-family: Roboto, sans-serif;
    font-size: 48px;
    font-weight: bold;
    letter-spacing: 0;
    fill: #fafafa;
}
.wm-logo {
    fill: none;
    stroke: #fafafa;
    stroke-width: 5;
    stroke-linejoin: round;
}

/* taskbar */
.taskbar {
    height: 28px;
    border-top: 1px solid #d4cec7;
    background: #d4cec7;
    box-shadow: inset 0 1px #fff;
    display: flex;
    align-items: center;
    padding: 1px 2px 0;
}
.start {
    width: 52px;
    height: 22px;
    display: flex;
    align-items: center;
    padding-left: 1px;
    font-weight: bold;
    letter-spacing: 0.1px;
    box-shadow: inset -1px -1px #404040, inset 1px 1px #fff, inset -2px -2px #808080;
}
.tasks {
    display: flex;
    gap: 2px;
    margin-left: 9px;
}
.task {
    width: 32px;
    height: 22px;
    display: flex;
    align-items: center;
    justify-content: center;
}
.raised {
    box-shadow: inset -1px -1px #404040, inset 1px 1px #fff, inset -2px -2px #808080;
}
.pressed {
    background: #fff;
    box-shadow: inset 1px 1px #404040, inset -1px -1px #fff, inset 2px 2px #808080;
}
.tray {
    width: 156px;
    height: 22px;
    margin-left: auto;
    border: 1px solid #8a8680;
    border-right-color: #fff;
    border-bottom-color: #fff;
    display: flex;
    align-items: center;
    gap: 7px;
    padding-left: 5px;
}
.clock {
    margin: 0 4px 0 10px;
}
```
